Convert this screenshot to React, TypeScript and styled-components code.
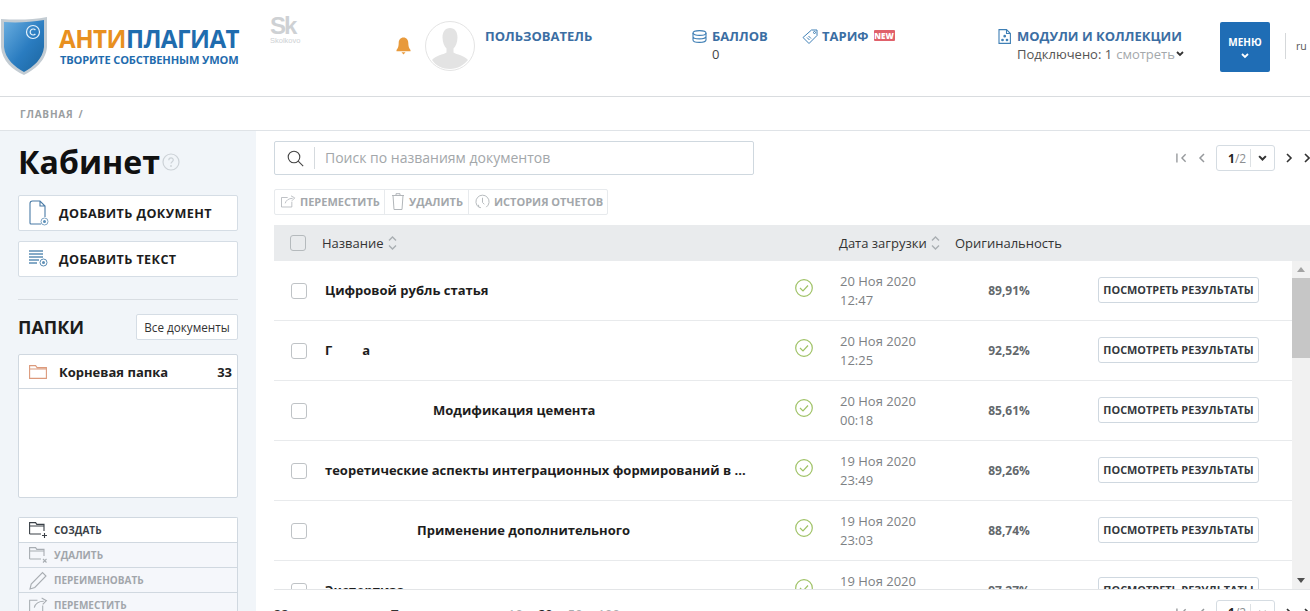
import React from "react";
import styled, { createGlobalStyle } from "styled-components";

const Global = createGlobalStyle`
  html, body { margin: 0; padding: 0; height: 100%; overflow: hidden; background: #fff; }
  body { font-family: "Open Sans", "Liberation Sans", sans-serif; color: #222; }
  #root { height: 611px; width: 1310px; overflow: hidden; }
  * { box-sizing: border-box; }
`;

const Page = styled.div`
  width: 1310px; height: 611px; display: flex; flex-direction: column; overflow: hidden;
`;
const Header = styled.header`
  height: 97px; flex: none; display: flex; align-items: flex-start; border-bottom: 1px solid #d9dcdf; background: #fff;
`;
const Cell = styled.div<{ $w: number; $top: number }>`
  flex: none; width: ${p => p.$w}px; padding-top: ${p => p.$top}px; display: flex; align-items: flex-start;
`;
const LogoText = styled.div`
  margin: 9px 0 0 11px; display: flex; flex-direction: column;
`;
const Brand = styled.div`
  font-size: 24.2px; font-weight: 700; line-height: 27px; color: #1f6cae; white-space: nowrap; letter-spacing: -0.55px;
`;
const BrandAccent = styled.span` color: #e8901f; `;
const Slogan = styled.div`
  font-size: 11.1px; font-weight: 700; line-height: 15px; color: #1f6cae; white-space: nowrap; letter-spacing: -0.14px; margin-left: 1px;
`;
const Sk = styled.div`
  display: flex; flex-direction: column; align-items: flex-start; color: #ced1d4; width: 32px;
`;
const SkMark = styled.div`
  font-family: "Liberation Sans", sans-serif; font-size: 24px; font-weight: 700; line-height: 21px; letter-spacing: -2px;
`;
const SkName = styled.div`
  font-family: "Liberation Sans", sans-serif; font-size: 7.5px; line-height: 9px;
`;
const Avatar = styled.div`
  width: 50px; height: 50px; border-radius: 50%; border: 1px solid #e4e4e4; overflow: hidden; background: #fff;
`;
const NavLink = styled.div`
  font-size: 13px; font-weight: 700; line-height: 16px; color: #3b6ea3; white-space: nowrap; display: flex; align-items: center;
`;
const NavIcon = styled.span<{ $w: number }>`
  width: ${p => p.$w}px; flex: none; display: flex; align-items: center;
`;
const Points = styled.div`
  font-size: 13px; line-height: 18px; color: #444; margin: 1px 0 0 20px;
`;
const NewBadge = styled.span`
  margin-left: 5px; margin-top: -2px; background: #e0616b; color: #fff; font-size: 8px; font-weight: 800; line-height: 11px; width: 21px; text-align: center; border-radius: 1px;
`;
const Connected = styled.div`
  font-size: 13px; line-height: 18px; color: #555; margin: 1px 0 0 19px; white-space: nowrap; display: flex; align-items: center;
`;
const Muted = styled.span` color: #a4a8ab; margin: 0 1px 0 4px; `;
const MenuButton = styled.div`
  width: 50px; height: 50px; background: #1f6db5; border-radius: 2px; color: #fff; font-size: 10px; font-weight: 700; display: flex; flex-direction: column; align-items: center; padding-top: 14px; line-height: 12px; gap: 5px;
`;
const LangDivider = styled.div`
  width: 1px; height: 26px; background: #d5d8da; margin: 33px 10px 0 0;
`;
const Lang = styled.div`
  font-size: 10.5px; color: #555; margin-top: 39px; line-height: 14px;
`;
const Crumbs = styled.div`
  height: 34px; flex: none; display: flex; align-items: center; padding: 1px 0 0 20px; font-size: 10px; font-weight: 700; letter-spacing: 0.8px; color: #9a9ea1; border-bottom: 1px solid #dfe3e7; gap: 5px;
`;
const Body = styled.div`
  flex: 1; min-height: 0; display: flex; overflow: hidden;
`;
const Side = styled.aside`
  width: 256px; flex: none; background: #f1f5f9; padding: 12px 18px 0; overflow: hidden;
`;
const TitleRow = styled.div`
  display: flex; align-items: center; height: 38px; gap: 2px;
`;
const Title = styled.h1`
  margin: -1px 0 0; font-size: 32.1px; font-weight: 700; line-height: 38px; color: #111;
`;
const AddButton = styled.div<{ $top: number }>`
  height: 36px; margin-top: ${p => p.$top}px; background: #fff; border: 1px solid #d5dde5; border-radius: 2px; display: flex; align-items: center; padding-left: 10px; gap: 10px; font-size: 12.6px; font-weight: 700; letter-spacing: 0.4px; color: #1c1c1c;
`;
const SideRule = styled.div`
  height: 1px; background: #d8dde2; margin-top: 22px;
`;
const FolderHead = styled.div`
  display: flex; align-items: center; justify-content: space-between; margin-top: 14px; height: 26px;
`;
const FolderTitle = styled.div`
  font-size: 18px; font-weight: 700; color: #1c1c1c;
`;
const AllDocs = styled.div`
  width: 102px; height: 26px; background: #fff; border: 1px solid #d5dde5; border-radius: 2px; font-size: 11.7px; line-height: 24px; text-align: center; color: #333; white-space: nowrap;
`;
const FolderBox = styled.div`
  margin-top: 14px; height: 144px; background: #fff; border: 1px solid #d0d8e0; border-radius: 2px;
`;
const FolderRow = styled.div`
  height: 34px; display: flex; align-items: center; padding: 0 5px 0 10px; border-bottom: 1px solid #d0d8e0; font-size: 13px; font-weight: 700; color: #222;
`;
const FolderName = styled.span` margin-left: 12px; flex: 1; `;
const ActionList = styled.div`
  margin-top: 19px; border: 1px solid #d0d8e0; border-bottom: 0; border-radius: 2px 2px 0 0;
`;
const ActionRow = styled.div<{ $on?: boolean }>`
  height: 25px; display: flex; align-items: center; padding-left: 10px; gap: 6px; font-size: 10px; font-weight: 700; background: ${p => (p.$on ? "#fff" : "#f5f7fb")}; color: ${p => (p.$on ? "#3a4047" : "#a2a6ab")}; border-bottom: 1px solid #d0d8e0;
`;
const Main = styled.main`
  width: 1054px; flex: none; padding-top: 10px; overflow: hidden; background: #fff;
`;
const TopRow = styled.div`
  display: flex; align-items: center; height: 34px; padding-left: 18px;
`;
const Search = styled.div`
  width: 480px; height: 34px; flex: none; border: 1px solid #cfd8df; border-radius: 2px; display: flex; align-items: center; padding-left: 12px;
`;
const SearchRule = styled.div`
  width: 1px; height: 22px; background: #d5dade; margin: 0 10px 0 10px;
`;
const Placeholder = styled.div`
  font-size: 14px; color: #a3a7aa; margin-top: -2px;
`;
const Pager = styled.div<{ $gap: number }>`
  margin-left: ${p => p.$gap}px; display: flex; align-items: center; flex: none;
`;
const PageBox = styled.div`
  width: 59px; height: 26px; margin: 0 11px 0 11px; border: 1px solid #d5dce2; border-radius: 3px; display: flex; align-items: center; font-size: 12px; color: #8c8f92; padding-left: 11px;
`;
const PageNow = styled.b` color: #222; `;
const PageRule = styled.span`
  width: 1px; height: 18px; background: #dde1e4; margin: 0 7px 0 4px;
`;
const ArrowSlot = styled.span<{ $ml: number }>`
  display: flex; align-items: center; margin-left: ${p => p.$ml}px;
`;
const Tools = styled.div`
  margin: 14px 0 0 18px; display: flex; width: 334px; height: 26px; border: 1px solid #e7eaed; border-radius: 2px;
`;
const Tool = styled.div<{ $w: number }>`
  width: ${p => p.$w}px; flex: none; display: flex; align-items: center; padding: 0 0 1px 6px; gap: 4px; font-size: 11px; font-weight: 700; color: #a3a7ab; border-right: 1px solid #e7eaed; white-space: nowrap;
  &:last-child { border-right: 0; }
`;
const TableHead = styled.div`
  margin: 10px 0 0 18px; height: 36px; background: #e9ebed; display: grid; grid-template-columns: 48px 517px 116px 1fr; align-items: center; font-size: 13px; color: #333;
`;
const HeadCell = styled.div`
  display: flex; align-items: center; gap: 4px; white-space: nowrap;
`;
const Box = styled.span<{ $hl?: boolean }>`
  display: block; width: 16px; height: 16px; border-radius: 3px; border: 1px solid ${p => (p.$hl ? "#b5babd" : "#bfc3c6")}; background: ${p => (p.$hl ? "#e9ebed" : "#fff")};
`;
const HeadBox = styled.div` padding-left: 16px; `;
const ListWrap = styled.div`
  margin-left: 18px; height: 329px; display: flex; border-bottom: 1px solid #e3e5e7; overflow: hidden;
`;
const List = styled.div`
  width: 1018px; flex: none; overflow: hidden;
`;
const Row = styled.div`
  height: 60px; display: grid; grid-template-columns: 51px 470px 45px 114px 110px 34px 161px; align-items: center; border-bottom: 1px solid #e8eaec;
`;
const RowBox = styled.div` padding-left: 17px; padding-top: 1px; `;
const DocName = styled.div<{ $indent: number }>`
  font-size: 13px; font-weight: 700; color: #1d1d1d; padding-left: ${p => p.$indent}px; white-space: nowrap; margin-top: -1px;
`;
const Blank = styled.span` display: inline-block; width: 30px; `;
const StatusCell = styled.div` margin-top: -5px; display: flex; `;
const DateCell = styled.div`
  font-size: 13px; line-height: 19px; color: #7d8184; margin-top: 1px;
`;
const Pct = styled.div`
  font-size: 12px; font-weight: 700; color: #63686c; text-align: center;
`;
const ResultBtn = styled.div`
  grid-column: 7; height: 26px; margin-top: -2px; border: 1px solid #cfd8e0; border-radius: 3px; font-size: 10.9px; font-weight: 700; line-height: 24px; text-align: center; color: #33383d; white-space: nowrap;
`;
const Scroll = styled.div`
  width: 18px; flex: none; background: #f1f1f1; display: flex; flex-direction: column; align-items: center;
`;
const Arrow = styled.div<{ $down?: boolean }>`
  height: 17px; flex: none; display: flex; align-items: center; justify-content: center;
  &::before { content: ""; border-left: 4px solid transparent; border-right: 4px solid transparent; ${p => (p.$down ? "border-top: 5px solid #505050;" : "border-bottom: 5px solid #a3a3a3;")} }
`;
const Thumb = styled.div`
  width: 18px; height: 80px; background: #c6c6c6;
`;
const ScrollFill = styled.div` flex: 1; `;
const Footer = styled.div`
  display: flex; align-items: flex-start; padding: 15px 0 0 18px; height: 40px; font-size: 13px; line-height: 18px; color: #333; white-space: nowrap;
`;
const FootCount = styled.span` width: 116px; flex: none; `;
const FootLabel = styled.span` width: 118px; flex: none; `;
const FootSizes = styled.div` width: 126px; flex: none; display: flex; gap: 15px; `;
const FootSize = styled.span<{ $on?: boolean }>`
  color: ${p => (p.$on ? "#222" : "#a8acaf")}; font-weight: ${p => (p.$on ? 700 : 400)};
`;
const FootPager = styled.div`
  flex: none; margin-left: 542px; margin-top: -5px; display: flex; align-items: center;
`;

const Shield = () => (
  <svg width="48" height="60" viewBox="0 0 48 60">
    <defs>
      <linearGradient id="sh" x1="0" y1="0" x2="1" y2="1">
        <stop offset="0" stopColor="#6aaee0" />
        <stop offset="0.55" stopColor="#2a7cc0" />
        <stop offset="1" stopColor="#1b659f" />
      </linearGradient>
    </defs>
    <path d="M1 3C16 4 32 4 47 1v30C46 45 34 54 24 59 13 54 2 45 1 31Z" fill="#c3ccd3" />
    <path d="M4 6c14 1 27 0 40-2v27c-1 12-11 20-20 25C15 51 5 43 4 31Z" fill="url(#sh)" />
    <circle cx="33" cy="16" r="6.5" fill="none" stroke="#e6f2fb" strokeWidth="1.2" />
    <path d="M35.4 14a3 3 0 1 0 0 4" fill="none" stroke="#e6f2fb" strokeWidth="1.2" />
  </svg>
);
const Bell = () => (
  <svg width="15" height="18" viewBox="0 0 15 18">
    <path d="M7.5 0.5c3 0 4.8 2.4 4.8 5.5 0 3 .6 5 2.2 7v1.3H.5V13c1.6-2 2.2-4 2.2-7 0-3.1 1.8-5.5 4.8-5.5Z" fill="#e89a3c" />
    <path d="M5.5 15.2h4L7.5 17.5Z" fill="#e89a3c" />
  </svg>
);
const Person = () => (
  <svg width="48" height="48" viewBox="0 0 48 48">
    <path d="M24 6c5 0 7.5 4 7.5 9.5 0 5-2 9-4 11v4c3 2 11 3 14.5 7.5-4 5-10.5 9-18 9S10 44 6 38c3.5-4.5 11.5-5.5 14.5-7.5v-4c-2-2-4-6-4-11C16.5 10 19 6 24 6Z" fill="#e3e3e3" />
  </svg>
);
const Coins = () => (
  <svg width="15" height="13" viewBox="0 0 15 13" fill="none" stroke="#3f7fb5" strokeWidth="1.1">
    <ellipse cx="7.5" cy="3" rx="6.5" ry="2.4" />
    <path d="M1 3v7c0 1.3 2.9 2.4 6.5 2.4S14 11.3 14 10V3M1 6.5c0 1.3 2.9 2.4 6.5 2.4S14 7.8 14 6.5" />
  </svg>
);
const Tag = () => (
  <svg width="16" height="15" viewBox="0 0 16 15" fill="none" stroke="#3f7fb5" strokeWidth="1">
    <path d="M9.5 1H15v5.5L7 14.5 1 8.5Z" />
    <circle cx="12.5" cy="3.5" r="1" />
    <path d="M5 8.5l2.5 2.5M6.5 7l2.5 2.5" />
  </svg>
);
const ModuleDoc = () => (
  <svg width="13" height="15" viewBox="0 0 13 15" fill="none" stroke="#3f7fb5" strokeWidth="1.1">
    <path d="M1 .6h7.5L12.4 4.5v9.9H1ZM8.5.6v3.9h3.9" />
    <circle cx="6.7" cy="7.2" r=".8" fill="#3f7fb5" />
    <circle cx="4.5" cy="11" r=".8" fill="#3f7fb5" />
    <circle cx="9" cy="11" r=".8" fill="#3f7fb5" />
  </svg>
);
const Chev = ({ c = "#333", w = 8, sw = 1.8 }: { c?: string; w?: number; sw?: number }) => (
  <svg width={w} height={w * 0.7} viewBox="0 0 8 5.6" fill="none" stroke={c} strokeWidth={sw}>
    <path d="M1 1l3 3 3-3" />
  </svg>
);
const Help = () => (
  <svg width="18" height="18" viewBox="0 0 18 18">
    <circle cx="9" cy="9" r="8" fill="none" stroke="#ccd2d7" strokeWidth="1.2" />
    <path d="M6.8 7.2c0-3 4.5-3 4.5-.2 0 1.7-2.3 1.8-2.3 3.6" fill="none" stroke="#ccd2d7" strokeWidth="1.2" />
    <circle cx="9" cy="13" r=".9" fill="#ccd2d7" />
  </svg>
);
const AddDoc = () => (
  <svg width="20" height="26" viewBox="0 0 20 26" fill="none">
    <path d="M1 23V3.5C1 2 2 1 3.5 1H11l5 5v11M11 1v5h5M1 23c0 .6.5 1 1 1h10" stroke="#4a7ba6" strokeWidth="1.1" />
    <circle cx="15.5" cy="21.5" r="3.5" stroke="#7fa6c6" />
    <circle cx="15.5" cy="21.5" r="1.5" fill="#5c8fb8" />
  </svg>
);
const AddTxt = () => (
  <svg width="20" height="18" viewBox="0 0 20 18" fill="none" stroke="#5d8eb5" strokeWidth="1.3">
    <path d="M0 1h14M0 4h14M0 7h14M0 10h10M0 13h8" />
    <circle cx="14.5" cy="12.5" r="3.5" strokeWidth="1" />
    <circle cx="14.5" cy="12.5" r="1.5" fill="#5d8eb5" stroke="none" />
  </svg>
);
const FolderIco = () => (
  <svg width="18" height="14" viewBox="0 0 18 14" fill="none" stroke="#dc9a7c" strokeWidth="1.1">
    <path d="M.6 13.4V.6h6l1.5 2h9.3v10.8ZM.6 4h16.8" />
  </svg>
);
const FolderMark = ({ c, mark }: { c: string; mark: "plus" | "x" }) => (
  <svg width="19" height="17" viewBox="0 0 19 17" fill="none" stroke={c} strokeWidth="1.1">
    <path d="M.6 12V.6h6l1.2 1.8H15V9M.6 4h14.4M.6 12H12" />
    {mark === "plus" ? <path d="M15.5 11v5M13 13.5h5" /> : <path d="M14 12l3.5 3.5M17.5 12L14 15.5" />}
  </svg>
);
const Pencil = () => (
  <svg width="19" height="19" viewBox="0 0 19 19" fill="none" stroke="#a8adb2" strokeWidth="1.1">
    <path d="M1 18l1.2-5L13.5 1.5 17 5 5.8 16.5Z" />
  </svg>
);
const MoveIco = ({ c = "#b2b6ba", w = 15 }: { c?: string; w?: number }) => (
  <svg width={w} height={(w * 15) / 18} viewBox="0 0 18 15" fill="none" stroke={c} strokeWidth="1">
    <path d="M8 3H.6v11.4H13V8" />
    <path d="M5 10c1-3.5 4-6 9-6M12 1l4.5 2.5L13 7" />
  </svg>
);
const Trash = () => (
  <svg width="14" height="17" viewBox="0 0 14 17" fill="none" stroke="#b2b6ba" strokeWidth="1">
    <path d="M1 2.5h12M5 2.5V.7h4v1.8M2 2.5l1 14h8l1-14" />
  </svg>
);
const History = () => (
  <svg width="15" height="15" viewBox="0 0 16 16" fill="none" stroke="#b2b6ba" strokeWidth="1">
    <path d="M4 14A7 7 0 1 1 12 14" />
    <path d="M8 4v5l2 2M4 14l-.3-2.5M4 14l2.3.6" />
  </svg>
);
const SearchIco = () => (
  <svg width="17" height="17" viewBox="0 0 17 17" fill="none" stroke="#444" strokeWidth="1.1">
    <circle cx="7" cy="7" r="5.8" />
    <path d="M11.2 11.2l5 5" />
  </svg>
);
const Sort = () => (
  <svg width="9" height="16" viewBox="0 0 9 16" fill="none" stroke="#a9aeb2" strokeWidth="1.4">
    <path d="M1 5.5L4.5 2 8 5.5M1 10.5L4.5 14 8 10.5" />
  </svg>
);
const Check = () => (
  <svg width="18" height="18" viewBox="0 0 18 18" fill="none" stroke="#9fc266" strokeWidth="1.2">
    <circle cx="9" cy="9" r="8.3" />
    <path d="M5 9l3 3 5-5.5" />
  </svg>
);
const First = () => (
  <svg width="11" height="10" viewBox="0 0 12 10" fill="none" stroke="#96999c" strokeWidth="1.5">
    <path d="M1 0v10M10.5 1L6.5 5l4 4" />
  </svg>
);
const Prev = () => (
  <svg width="7" height="10" viewBox="0 0 7 10" fill="none" stroke="#96999c" strokeWidth="1.5">
    <path d="M6 1L2 5l4 4" />
  </svg>
);
const Next = () => (
  <svg width="7" height="10" viewBox="0 0 7 10" fill="none" stroke="#333" strokeWidth="1.6">
    <path d="M1 1l4 4-4 4" />
  </svg>
);

const PagerInner = () => (
  <>
    <First />
    <ArrowSlot $ml={11}><Prev /></ArrowSlot>
    <PageBox>
      <PageNow>1</PageNow>/2
      <PageRule />
      <Chev w={9} />
    </PageBox>
    <Next />
    <ArrowSlot $ml={11}><Next /></ArrowSlot>
  </>
);

const docs = [
  { title: <>Цифровой рубль статья</>, indent: 0, d: "20 Ноя 2020", t: "12:47", p: "89,91%" },
  { title: <>Г<Blank />а</>, indent: 0, d: "20 Ноя 2020", t: "12:25", p: "92,52%" },
  { title: <>Модификация цемента</>, indent: 108, d: "20 Ноя 2020", t: "00:18", p: "85,61%" },
  { title: <>теоретические аспекты интеграционных формирований в ...</>, indent: 0, d: "19 Ноя 2020", t: "23:49", p: "89,26%" },
  { title: <>Применение дополнительного</>, indent: 92, d: "19 Ноя 2020", t: "23:03", p: "88,74%" },
  { title: <>Экспертиза</>, indent: 0, d: "19 Ноя 2020", t: "22:41", p: "97,27%" },
];

export default function App() {
  return (
    <Page>
      <Global />
      <Header>
        <Cell $w={270} $top={16}>
          <Shield />
          <LogoText>
            <Brand><BrandAccent>АНТИ</BrandAccent>ПЛАГИАТ</Brand>
            <Slogan>ТВОРИТЕ СОБСТВЕННЫМ УМОМ</Slogan>
          </LogoText>
        </Cell>
        <Cell $w={126} $top={15}>
          <Sk><SkMark>Sk</SkMark><SkName>Skolkovo</SkName></Sk>
        </Cell>
        <Cell $w={29} $top={37}><Bell /></Cell>
        <Cell $w={60} $top={21}><Avatar><Person /></Avatar></Cell>
        <Cell $w={207} $top={28}><NavLink>ПОЛЬЗОВАТЕЛЬ</NavLink></Cell>
        <Cell $w={110} $top={28}>
          <div>
            <NavLink><NavIcon $w={20}><Coins /></NavIcon>БАЛЛОВ</NavLink>
            <Points>0</Points>
          </div>
        </Cell>
        <Cell $w={196} $top={28}>
          <NavLink><NavIcon $w={20}><Tag /></NavIcon>ТАРИФ<NewBadge>NEW</NewBadge></NavLink>
        </Cell>
        <Cell $w={222} $top={28}>
          <div>
            <NavLink><NavIcon $w={19}><ModuleDoc /></NavIcon>МОДУЛИ И КОЛЛЕКЦИИ</NavLink>
            <Connected>Подключено: 1<Muted>смотреть</Muted><Chev /></Connected>
          </div>
        </Cell>
        <Cell $w={65} $top={22}>
          <MenuButton>МЕНЮ<Chev c="#fff" w={8} /></MenuButton>
        </Cell>
        <LangDivider />
        <Lang>ru</Lang>
      </Header>
      <Crumbs>ГЛАВНАЯ <span>/</span></Crumbs>
      <Body>
        <Side>
          <TitleRow><Title>Кабинет</Title><Help /></TitleRow>
          <AddButton $top={14}><AddDoc />ДОБАВИТЬ ДОКУМЕНТ</AddButton>
          <AddButton $top={10}><AddTxt />ДОБАВИТЬ ТЕКСТ</AddButton>
          <SideRule />
          <FolderHead><FolderTitle>ПАПКИ</FolderTitle><AllDocs>Все документы</AllDocs></FolderHead>
          <FolderBox>
            <FolderRow><FolderIco /><FolderName>Корневая папка</FolderName>33</FolderRow>
          </FolderBox>
          <ActionList>
            <ActionRow $on><FolderMark c="#3a4047" mark="plus" />СОЗДАТЬ</ActionRow>
            <ActionRow><FolderMark c="#a8adb2" mark="x" />УДАЛИТЬ</ActionRow>
            <ActionRow><Pencil />ПЕРЕИМЕНОВАТЬ</ActionRow>
            <ActionRow><MoveIco c="#a8adb2" w={19} />ПЕРЕМЕСТИТЬ</ActionRow>
          </ActionList>
        </Side>
        <Main>
          <TopRow>
            <Search>
              <SearchIco />
              <SearchRule />
              <Placeholder>Поиск по названиям документов</Placeholder>
            </Search>
            <Pager $gap={422}><PagerInner /></Pager>
          </TopRow>
          <Tools>
            <Tool $w={110}><MoveIco />ПЕРЕМЕСТИТЬ</Tool>
            <Tool $w={84}><Trash />УДАЛИТЬ</Tool>
            <Tool $w={139}><History />ИСТОРИЯ ОТЧЕТОВ</Tool>
          </Tools>
          <TableHead>
            <HeadBox><Box $hl /></HeadBox>
            <HeadCell>Название<Sort /></HeadCell>
            <HeadCell>Дата загрузки<Sort /></HeadCell>
            <HeadCell>Оригинальность</HeadCell>
          </TableHead>
          <ListWrap>
            <List>
              {docs.map((r, i) => (
                <Row key={i}>
                  <RowBox><Box /></RowBox>
                  <DocName $indent={r.indent}>{r.title}</DocName>
                  <StatusCell><Check /></StatusCell>
                  <DateCell>{r.d}<br />{r.t}</DateCell>
                  <Pct>{r.p}</Pct>
                  <ResultBtn>ПОСМОТРЕТЬ РЕЗУЛЬТАТЫ</ResultBtn>
                </Row>
              ))}
            </List>
            <Scroll>
              <Arrow />
              <Thumb />
              <ScrollFill />
              <Arrow $down />
            </Scroll>
          </ListWrap>
          <Footer>
            <FootCount>33 документа</FootCount>
            <FootLabel>Показывать по</FootLabel>
            <FootSizes>
              <FootSize>10</FootSize>
              <FootSize $on>20</FootSize>
              <FootSize>50</FootSize>
              <FootSize>100</FootSize>
            </FootSizes>
            <FootPager><PagerInner /></FootPager>
          </Footer>
        </Main>
      </Body>
    </Page>
  );
}
